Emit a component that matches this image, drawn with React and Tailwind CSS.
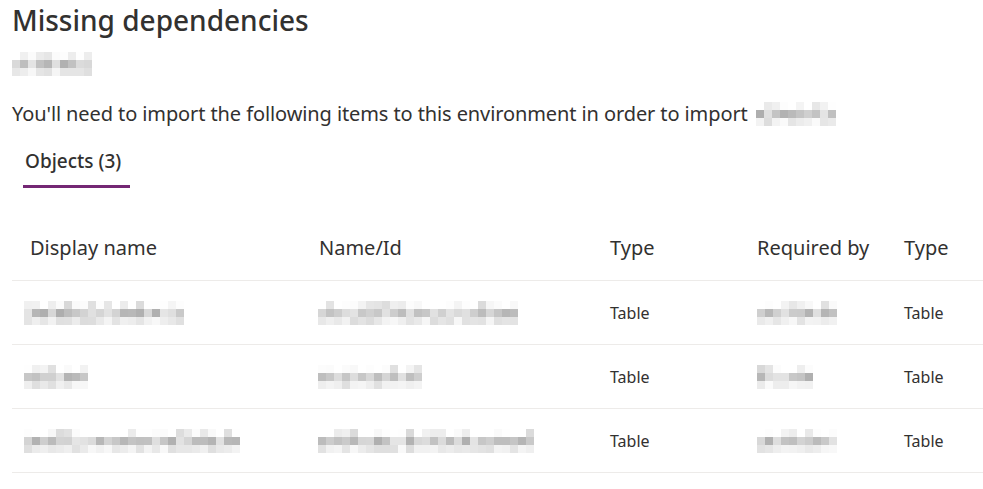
const rand = (seed, i) => {
  const x = Math.sin(seed * 97.3 + i * 13.7) * 10000;
  return x - Math.floor(x);
};

function Mosaic({ seed, cells }) {
  const tone = [
    (t) => 1 - Math.pow(t, 3) * 0.16,
    (t) => 0.68 + t * 0.22,
    (t) => 0.86 + t * 0.12,
  ];
  return (
    <div className="flex flex-col">
      {tone.map((f, r) => (
        <div key={r} className="flex">
          {Array.from({ length: cells }).map((_, i) => {
            const v = Math.round(255 * f(rand(seed * 3 + r, i)));
            return <div key={i} className="w-2 h-2" style={{ background: `rgb(${v},${v},${v})` }} />;
          })}
        </div>
      ))}
    </div>
  );
}

const rows = [
  { a: 20, b: 25, c: 10 },
  { a: 8, b: 13, c: 7 },
  { a: 27, b: 27, c: 10 },
];

export default function App() {
  return (
    <div className="w-[983px] h-[489px] bg-white text-[#323130] overflow-hidden" style={{ fontFamily: '"Noto Sans", "Open Sans", sans-serif' }}>
      <div className="pl-3">
        <h1 className="text-[28px] font-medium leading-9 pt-[2px]">Missing dependencies</h1>
        <div className="mt-[14px] h-6">
          <Mosaic seed={1} cells={10} />
        </div>
        <p className="mt-[24px] text-[20px] tracking-[-0.1px] leading-7 flex items-center gap-2">
          You'll need to import the following items to this environment in order to import
          <Mosaic seed={5} cells={10} />
        </p>
        <div className="mt-[16px] ml-[11px] w-[107px]">
          <div className="text-[19px] font-medium leading-7 pl-[2px] pt-[3px] pb-[10px]">Objects (3)</div>
          <div className="h-[3px] bg-[#742774]" />
        </div>
      </div>
      <div className="ml-3 mt-[31px]">
        <div className="grid grid-cols-[290px_291px_147px_147px_1fr] h-[62px] items-center border-b border-[#edebe9] text-[20px]">
          <div className="pl-[18px] pb-[4px]">Display name</div>
          <div className="pl-[17px] pb-[4px]">Name/Id</div>
          <div className="pl-[17px] pb-[4px]">Type</div>
          <div className="pl-[17px] pb-[4px]">Required by</div>
          <div className="pl-[17px] pb-[4px]">Type</div>
        </div>
        {rows.map((r, i) => (
          <div key={i} className="grid grid-cols-[290px_291px_147px_147px_1fr] h-16 items-center border-b border-[#edebe9] text-[16px]">
            <div className="pl-[12px]"><Mosaic seed={10 + i} cells={r.a} /></div>
            <div className="pl-[16px]"><Mosaic seed={20 + i} cells={r.b} /></div>
            <div className="pl-[17px] pt-[1px]">Table</div>
            <div className="pl-[17px]"><Mosaic seed={30 + i} cells={r.c} /></div>
            <div className="pl-[17px] pt-[1px]">Table</div>
          </div>
        ))}
      </div>
    </div>
  );
}
